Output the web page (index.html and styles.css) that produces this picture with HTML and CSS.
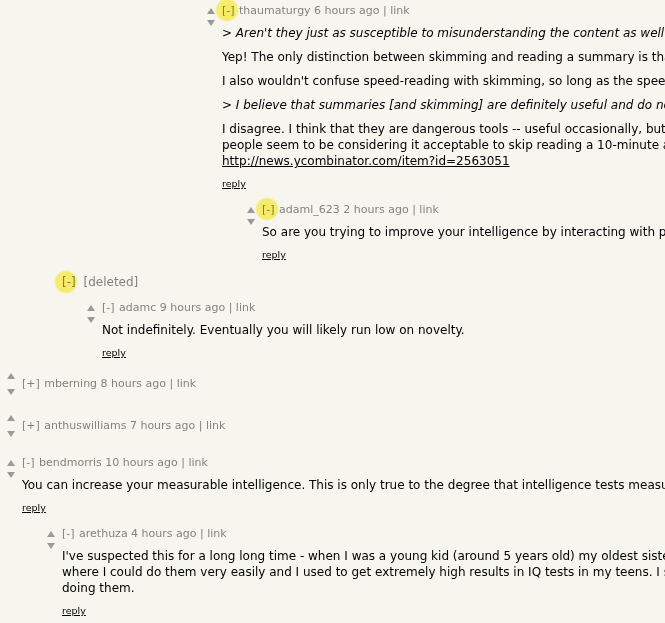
FILE: index.html
```html
<!DOCTYPE html>
<html>
<head>
<meta charset="utf-8">
<link rel="stylesheet" href="styles.css">
</head>
<body>
<div class="thread">

  <div class="comment l5">
    <div class="vote"><span class="up"></span><span class="down"></span></div>
    <div class="body">
      <div class="head"><span class="toggle hl">[-]</span> thaumaturgy 6 hours ago | link</div>
      <div class="text">
        <p class="quote">&gt; Aren't they just as susceptible to misunderstanding the content as well as someone who reads the whole article?</p>
        <p>Yep! The only distinction between skimming and reading a summary is that with a summary somebody else has done the skimming for you.</p>
        <p>I also wouldn't confuse speed-reading with skimming, so long as the speed-reader is actually absorbing the material.</p>
        <p class="quote">&gt; I believe that summaries [and skimming] are definitely useful and do not necessarily lead to a loss of understanding.</p>
        <p>I disagree. I think that they are dangerous tools -- useful occasionally, but I've already seen a trend here where<br>people seem to be considering it acceptable to skip reading a 10-minute article in favor of a summary, e.g.<br><a class="url">http://news.ycombinator.com/item?id=2563051</a></p>
      </div>
      <div class="reply"><a>reply</a></div>
    </div>
  </div>

  <div class="comment l6">
    <div class="vote"><span class="up"></span><span class="down"></span></div>
    <div class="body">
      <div class="head"><span class="toggle hl">[-]</span> adaml_623 2 hours ago | link</div>
      <div class="text">
        <p>So are you trying to improve your intelligence by interacting with people who disagree with you?</p>
      </div>
      <div class="reply"><a>reply</a></div>
    </div>
  </div>

  <div class="comment l1 deleted">
    <div class="vote"></div>
    <div class="body">
      <div class="dhead"><span class="toggle hl hl-left">[-]</span> [deleted]</div>
    </div>
  </div>

  <div class="comment l2">
    <div class="vote"><span class="up"></span><span class="down"></span></div>
    <div class="body">
      <div class="head"><span class="toggle">[-]</span> adamc 9 hours ago | link</div>
      <div class="text">
        <p>Not indefinitely. Eventually you will likely run low on novelty.</p>
      </div>
      <div class="reply"><a>reply</a></div>
    </div>
  </div>

  <div class="comment l0 collapsed">
    <div class="vote"><span class="up"></span><span class="down"></span></div>
    <div class="body">
      <div class="head"><span class="toggle">[+]</span> mberning 8 hours ago | link</div>
    </div>
  </div>

  <div class="comment l0 collapsed">
    <div class="vote"><span class="up"></span><span class="down"></span></div>
    <div class="body">
      <div class="head"><span class="toggle">[+]</span> anthuswilliams 7 hours ago | link</div>
    </div>
  </div>

  <div class="comment l0">
    <div class="vote"><span class="up"></span><span class="down"></span></div>
    <div class="body">
      <div class="head"><span class="toggle">[-]</span> bendmorris 10 hours ago | link</div>
      <div class="text">
        <p>You can increase your measurable intelligence. This is only true to the degree that intelligence tests measure your actual intelligence.</p>
      </div>
      <div class="reply"><a>reply</a></div>
    </div>
  </div>

  <div class="comment l1">
    <div class="vote"><span class="up"></span><span class="down"></span></div>
    <div class="body">
      <div class="head"><span class="toggle">[-]</span> arethuza 4 hours ago | link</div>
      <div class="text">
        <p>I've suspected this for a long long time - when I was a young kid (around 5 years old) my oldest sister used to give me IQ puzzles to do,<br>where I could do them very easily and I used to get extremely high results in IQ tests in my teens. I suspect I just got good at<br>doing them.</p>
      </div>
      <div class="reply"><a>reply</a></div>
    </div>
  </div>

</div>
</body>
</html>
```

FILE: styles.css
```css
html, body {
  margin: 0;
  padding: 0;
  overflow: hidden;
  background: #f6f6ef;
}

body {
  font-family: "DejaVu Sans", Verdana, sans-serif;
  color: #000;
}

.thread {
  padding: 4px 0 0 4px;
  width: 1600px;
}

.comment {
  display: flex;
  align-items: flex-start;
  margin-bottom: 12px;
}

.l0 { margin-left: 0; }
.l1 { margin-left: 40px; }
.l2 { margin-left: 80px; }
.l5 { margin-left: 200px; }
.l6 { margin-left: 240px; }

.vote {
  width: 14px;
  flex: none;
  display: flex;
  flex-direction: column;
  align-items: center;
}

.up, .down {
  display: block;
  width: 0;
  height: 0;
  border-left: 4px solid transparent;
  border-right: 4px solid transparent;
}

.up {
  margin-top: 4px;
  border-bottom: 6px solid #9a9a9a;
}

.down {
  margin-top: 6px;
  border-top: 6px solid #9a9a9a;
}

.body {
  margin-left: 4px;
}

.head {
  font-size: 11px;
  line-height: 14px;
  color: #828282;
  white-space: nowrap;
}

.head .toggle {
  margin-right: 1px;
}

.dhead {
  font-size: 12px;
  line-height: 16px;
  color: #828282;
  white-space: nowrap;
}

.dhead .toggle {
  margin-right: 4px;
}

.deleted {
  margin-bottom: 11px;
}

.toggle {
  position: relative;
}

.hl::after {
  content: "";
  position: absolute;
  left: 50%;
  top: 50%;
  width: 24px;
  height: 24px;
  margin: -13px 0 0 -13px;
  border-radius: 50%;
  background: radial-gradient(circle, rgba(255, 243, 100, 0.95) 0%, rgba(255, 243, 100, 0.9) 58%, rgba(255, 243, 100, 0) 72%);
  mix-blend-mode: multiply;
  pointer-events: none;
}

.hl-left::after {
  margin-left: -15px;
  margin-top: -12px;
}

.text {
  margin-top: 7px;
  font-size: 12px;
  line-height: 16px;
  white-space: nowrap;
}

.text p {
  margin: 8px 0 0;
}

.text p:first-child {
  margin-top: 0;
}

.quote {
  font-style: italic;
}

.url {
  color: #000;
  text-decoration: underline;
}

.reply {
  margin-top: 8px;
  font-size: 9.5px;
  line-height: 14px;
}

.reply a {
  color: #000;
  text-decoration: underline;
}

.collapsed {
  align-items: center;
  margin-top: 1px;
  margin-bottom: 18px;
}

.comment:not(.collapsed) + .collapsed {
  margin-top: 2px;
}

.collapsed .up {
  margin-top: 1px;
}

.collapsed .down {
  margin-top: 10px;
  margin-bottom: 1px;
}
```
